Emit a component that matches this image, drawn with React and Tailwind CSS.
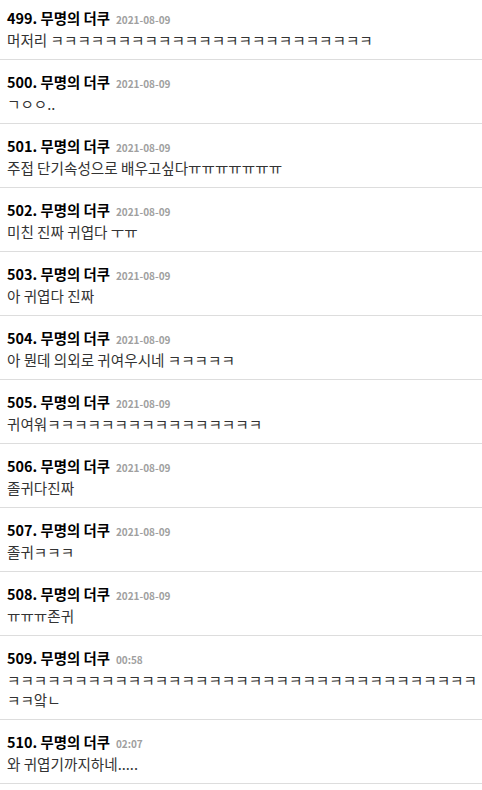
const comments = [
  { no: 499, date: "2021-08-09", text: "머저리 " + "ㅋ".repeat(24) },
  { no: 500, date: "2021-08-09", text: "ㄱㅇㅇ.." },
  { no: 501, date: "2021-08-09", text: "주접 단기속성으로 배우고싶다" + "ㅠ".repeat(7) },
  { no: 502, date: "2021-08-09", text: "미친 진짜 귀엽다 ㅜㅠ" },
  { no: 503, date: "2021-08-09", text: "아 귀엽다 진짜" },
  { no: 504, date: "2021-08-09", text: "아 뭔데 의외로 귀여우시네 ㅋㅋㅋㅋㅋ" },
  { no: 505, date: "2021-08-09", text: "귀여워" + "ㅋ".repeat(16) },
  { no: 506, date: "2021-08-09", text: "졸귀다진짜" },
  { no: 507, date: "2021-08-09", text: "졸귀ㅋㅋㅋ" },
  { no: 508, date: "2021-08-09", text: "ㅠㅠㅠ존귀" },
  { no: 509, date: "00:58", text: "ㅋ".repeat(37) + "앜ㄴ" },
  { no: 510, date: "02:07", text: "와 귀엽기까지하네....." },
];

export default function App() {
  return (
    <div className="min-h-screen bg-white overflow-hidden font-['Noto_Sans_CJK_KR','Noto_Sans',sans-serif]">
      <ul className="-mt-1">
        {comments.map((c) => (
          <li
            key={c.no}
            className="pl-[7px] pr-[3px] pt-[11px] pb-[9px] border-b border-[#dddddd]"
          >
            <div className="h-5 leading-5 whitespace-nowrap">
              <span className="text-[14.4px] font-bold text-black">
                {c.no}. 무명의 더쿠
              </span>
              <span className="ml-[6px] text-[10px] font-bold text-[#a0a0a0]">
                {c.date}
              </span>
            </div>
            <p className="mt-[3px] text-[14.6px] leading-5 text-[#333333] break-all">
              {c.text}
            </p>
          </li>
        ))}
      </ul>
    </div>
  );
}
